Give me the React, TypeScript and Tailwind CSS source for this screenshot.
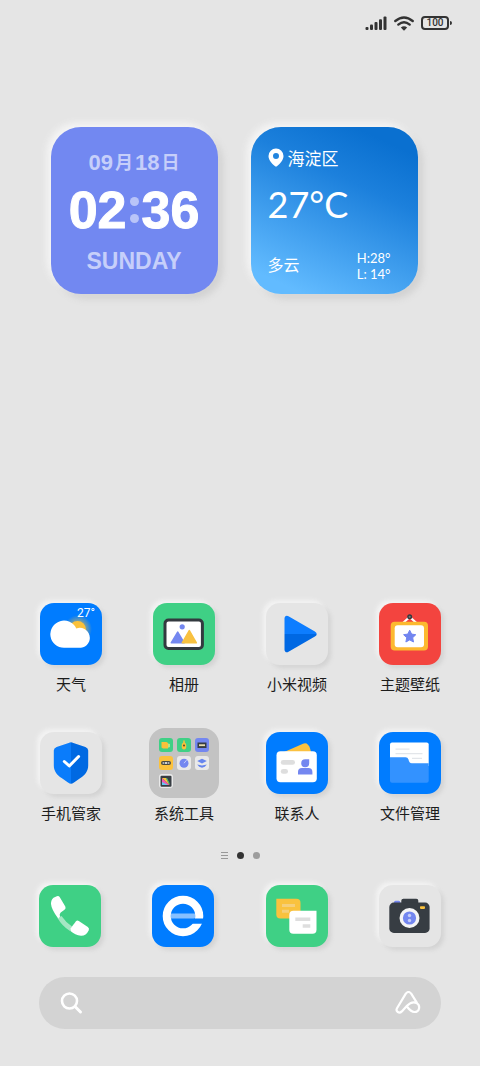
import type { ReactNode } from 'react';

interface AppItem {
  id: string;
  label: string;
  tile: string;
  icon: ReactNode;
}

const RAISED = 'shadow-[-3px_-3px_4px_#f3f3f3,3px_3px_4px_#d3d3d3]';
const RAISED_LARGE = 'shadow-[-4px_-4px_7px_#f5f5f5,5px_5px_7px_#d2d2d2]';

function Glyph({ children }: { children: ReactNode }) {
  return (
    <svg viewBox="0 0 62 62" className="block size-full" aria-hidden="true">
      {children}
    </svg>
  );
}

const weatherIcon = (
  <Glyph>
    <defs>
      <radialGradient id="sunGlow">
        <stop offset="0.45" stopColor="#fcc23c" stopOpacity="0.6" />
        <stop offset="1" stopColor="#fcc23c" stopOpacity="0" />
      </radialGradient>
    </defs>
    <circle cx="38" cy="26" r="14" fill="url(#sunGlow)" />
    <circle cx="37.5" cy="26.5" r="8.5" fill="#fbc13a" />
    <path d="M24 44.8a13.6 13.6 0 1 1 12.3-19.3a10 10 0 1 1 4.7 19.3z" fill="#fff" />
    <text x="37" y="14" fontSize="12" fill="#fff" fontFamily="Roboto, sans-serif">27°</text>
  </Glyph>
);

const galleryIcon = (
  <Glyph>
    <rect x="12" y="17" width="37.4" height="28.4" rx="3.5" fill="#fff" stroke="#33393f" strokeWidth="3" />
    <circle cx="29.2" cy="23.8" r="2.6" fill="#7487f0" />
    <path d="M18.3 39.8l6.4-10.6l6.4 10.6z" fill="#7487f0" stroke="#7487f0" strokeWidth="1.6" strokeLinejoin="round" />
    <path d="M29.3 39.8l7-12.2l7 12.2z" fill="#f8c140" stroke="#f8c140" strokeWidth="1.6" strokeLinejoin="round" />
  </Glyph>
);

const videoIcon = (
  <Glyph>
    <path d="M18.5 31V15.5c0-2.4 2-3.6 4-2.3l26.4 15.3q1.8 1 1.8 2.5z" fill="#0d7dff" />
    <path d="M18.5 31V46.5c0 2.4 2 3.6 4 2.3l26.4-15.3q1.8-1 1.8-2.5z" fill="#0068e3" />
  </Glyph>
);

const themeIcon = (
  <Glyph>
    <path d="M24 20l6.7-6l6.7 6" fill="none" stroke="#fff" strokeWidth="2.2" />
    <circle cx="30.7" cy="13.8" r="1.8" fill="#777" stroke="#33393f" strokeWidth="1.4" />
    <rect x="11.7" y="18.8" width="37.3" height="28.7" rx="4" fill="#fcb92f" />
    <rect x="15.7" y="22.2" width="29.3" height="22" rx="3" fill="#fff" />
    <path
      d="M30.7 27.2l1.9 3.9l4.2.6l-3.1 3l.8 4.3l-3.8-2.1l-3.8 2.1l.8-4.3l-3.1-3l4.2-.6z"
      fill="#7185f0"
      stroke="#7185f0"
      strokeWidth="1"
      strokeLinejoin="round"
    />
  </Glyph>
);

const securityIcon = (
  <Glyph>
    <path d="M31 10.2q1 0 2.4.7l12 4q2.8 1 2.8 3.6v15c0 6-3.6 9.6-7.8 12.6l-6.4 4.4q-1.8 1.2-3 1.2z" fill="#0069e2" />
    <path d="M31 10.2q-1 0-2.4.7l-12 4q-2.8 1-2.8 3.6v15c0 6 3.6 9.6 7.8 12.6l6.4 4.4q1.8 1.2 3 1.2z" fill="#0a7cfb" />
    <path d="M24.3 29.5l5 4.5l9.3-9.5" fill="none" stroke="#fff" strokeWidth="3" strokeLinecap="round" strokeLinejoin="round" />
  </Glyph>
);

const contactsIcon = (
  <Glyph>
    <path d="M17 20.5l20-8.8q3-1.2 5 1l1.5 2l1.8 6z" fill="#fbc140" />
    <rect x="10.5" y="19.3" width="40.3" height="31" rx="4" fill="#fff" />
    <rect x="14.8" y="28" width="14.2" height="4.8" rx="2.4" fill="#dedede" />
    <rect x="14.8" y="37" width="7.2" height="4.8" rx="2.4" fill="#dedede" />
    <path d="M43.200 27.2v3.9a4 4 0 1 1-4-3.9z" fill="#7487f0" />
    <path d="M32 42.5v-2.500q0-4 4-4h6.400q4 0 4 4v2.500z" fill="#7487f0" />
  </Glyph>
);

const filesIcon = (
  <Glyph>
    <path d="M11 30V12.5q0-2 2-2h34.7q2 0 2 2V34H11z" fill="#fff" />
    <path d="M16.5 17.2h14M16.5 21.7h27M33 26.3h10" stroke="#e3e6ea" strokeWidth="1.2" />
    <path d="M11 25.3h15.5q2.3 0 2.9 2l.6 2q.6 2 2.8 2h16.9v17.5q0 2-2 2H13q-2 0-2-2z" fill="#3392ff" />
  </Glyph>
);

const phoneIcon = (
  <Glyph>
    <path d="M22.5 31q4 6 10.500 10.500l-2 4.500q-8-5-12.500-13z" fill="#a4e7c3" />
    <path d="M14.500 12.700l3.300-1.500q2-.7 3 1l5.500 9.300q1 2-.8 3.300l-3.800 2.700q-1.600 1.300-.7 4.200l-1.800 1.700q-6.700-8.600-7.200-14.400q-.2-4 2.500-6.300z" fill="#fff" />
    <path d="M31.500 43.500l5.300-7q1.300-1.500 3-.5l9 6q1.800 1.300 1 3.200q-2.800 5.800-7.800 5.600q-6-.6-10.500-4.700z" fill="#fff" />
  </Glyph>
);

const browserIcon = (
  <Glyph>
    <rect x="18.5" y="28.5" width="25" height="5" fill="#86c0ff" />
    <circle cx="31" cy="31" r="16.3" fill="none" stroke="#fff" strokeWidth="8" />
    <path d="M42 33.5h12v5.2h-14z" fill="#007cff" />
  </Glyph>
);

const messagesIcon = (
  <Glyph>
    <path d="M10.3 13.8h20q4.2 0 4.2 4.2v11.500q0 4-4 4H14.300q-4 0-4-4z" fill="#f9c23e" />
    <path d="M16 20.500h13M16 26.300h7" stroke="#f5cf7a" strokeWidth="3" />
    <path d="M50.500 25.800h-23q-4.200 0-4.200 4.200v14.800q0 4 4 4h19.200q4 0 4-4z" fill="#fff" />
    <path d="M29.300 34.200h15M36.700 41h7.600" stroke="#dedede" strokeWidth="3.6" />
  </Glyph>
);

const cameraIcon = (
  <Glyph>
    <rect x="15" y="15.7" width="6.3" height="5" rx="1.5" fill="#7487f0" />
    <rect x="22.3" y="13.8" width="17" height="8" rx="2" fill="#373d43" />
    <rect x="10.3" y="17.6" width="40.3" height="30.3" rx="4.5" fill="#373d43" />
    <rect x="41" y="21.3" width="5" height="2.6" rx=".8" fill="#fcc23c" />
    <circle cx="30.5" cy="33" r="10" fill="#f5f5f5" />
    <circle cx="30.5" cy="33" r="6.6" fill="#7487f0" />
    <circle cx="30.5" cy="30.5" r="1.7" fill="#c5cdfa" />
    <circle cx="30.5" cy="35.5" r="1.7" fill="#c5cdfa" />
  </Glyph>
);

const folderMinis: { id: string; tile: string; art: ReactNode }[] = [
  {
    id: 'notes',
    tile: 'bg-[#3fd085]',
    art: (
      <>
        <path d="M2.500 4h5l1.500 1v5.500h-5l-1.500-1z" fill="#fbc13a" />
        <path d="M9 5.500l2 .5v3l-2 .7z" fill="#b5e58a" />
      </>
    ),
  },
  {
    id: 'compass',
    tile: 'bg-[#3fd085]',
    art: (
      <>
        <ellipse cx="7" cy="8" rx="2.3" ry="3.5" fill="#fbc13a" />
        <path d="M7 2.500v3" stroke="#fbc13a" strokeWidth="1.5" />
        <circle cx="7" cy="7.5" r="1" fill="#4d4a2e" />
      </>
    ),
  },
  {
    id: 'recorder',
    tile: 'bg-[#7487f0]',
    art: (
      <>
        <rect x="2.5" y="4.5" width="9" height="5.5" fill="#373d43" />
        <rect x="4" y="6.3" width="6" height="1.8" fill="#e8dcb0" />
      </>
    ),
  },
  {
    id: 'scanner',
    tile: 'bg-[#fcc23c]',
    art: (
      <>
        <rect x="2" y="5" width="10" height="4" rx="2" fill="#4a4a44" />
        <circle cx="4.5" cy="7" r="1.1" fill="#bbb" />
        <circle cx="9.5" cy="7" r="1.1" fill="#bbb" />
        <circle cx="7" cy="7" r="1" fill="#fff" />
      </>
    ),
  },
  {
    id: 'clock',
    tile: 'bg-[#e9e9e9]',
    art: (
      <>
        <circle cx="7" cy="7.2" r="4.5" fill="#7487f0" />
        <path d="M7 7.200l2.500-3" stroke="#c5cdfa" strokeWidth="1" />
      </>
    ),
  },
  {
    id: 'backup',
    tile: 'bg-[#e9e9e9]',
    art: (
      <>
        <path d="M7 2.800l4.800 2.300l-4.800 2.300l-4.800-2.300z" fill="#6685ee" />
        <path d="M2.200 8.500l4.800 1l4.800-1l-2 2.200l-2.800 1.100l-2.800-1.100z" fill="#6685ee" />
      </>
    ),
  },
  {
    id: 'palette',
    tile: 'bg-[#e9e9e9]',
    art: (
      <>
        <rect x="1.5" y="1.8" width="11" height="11" rx="1" fill="#373d43" />
        <path d="M3 4v7h7.500z" fill="#f15bb5" />
        <path d="M3 4h4l3.500 7z" fill="#fcc23c" />
        <path d="M7 4h1l2.500 5v2z" fill="#4bd07f" />
        <path d="M3 11h6l-6-3z" fill="#60c8f0" />
      </>
    ),
  },
];

const apps: AppItem[] = [
  { id: 'weather', label: '天气', tile: 'bg-[#007cff]', icon: weatherIcon },
  { id: 'gallery', label: '相册', tile: 'bg-[#3fd085]', icon: galleryIcon },
  { id: 'video', label: '小米视频', tile: 'bg-[#e5e5e5]', icon: videoIcon },
  { id: 'theme', label: '主题壁纸', tile: 'bg-[#f3443f]', icon: themeIcon },
  { id: 'security', label: '手机管家', tile: 'bg-[#e5e5e5]', icon: securityIcon },
  { id: 'tools', label: '系统工具', tile: '', icon: null },
  { id: 'contacts', label: '联系人', tile: 'bg-[#007cff]', icon: contactsIcon },
  { id: 'files', label: '文件管理', tile: 'bg-[#007cff]', icon: filesIcon },
];

const dock: AppItem[] = [
  { id: 'phone', label: '电话', tile: 'bg-[#3fd085]', icon: phoneIcon },
  { id: 'browser', label: '浏览器', tile: 'bg-[#007cff]', icon: browserIcon },
  { id: 'messages', label: '短信', tile: 'bg-[#3fd085]', icon: messagesIcon },
  { id: 'camera', label: '相机', tile: 'bg-[#e5e5e5]', icon: cameraIcon },
];

function Tile({ item }: { item: AppItem }) {
  return <span className={`block size-[62px] overflow-hidden rounded-[14px] ${RAISED} ${item.tile}`}>{item.icon}</span>;
}

function FolderTile() {
  return (
    <span className="-m-1 grid size-[70px] grid-cols-3 content-start gap-1 rounded-2xl bg-[#c3c3c3] p-[10px]">
      {folderMinis.map((mini) => (
        <span key={mini.id} className={`block size-[14px] rounded-[3px] ${mini.tile}`}>
          <svg viewBox="0 0 14 14" className="block size-full" aria-hidden="true">
            {mini.art}
          </svg>
        </span>
      ))}
    </span>
  );
}

function StatusBar() {
  return (
    <header className="flex h-[46px] items-center justify-end gap-[7px] pr-7">
      <svg viewBox="0 0 22 14" className="h-[14px] w-[22px]" fill="#333" aria-hidden="true">
        <rect x="0.5" y="11" width="3" height="3" rx="1" />
        <rect x="5" y="8.5" width="3" height="5.5" rx="1" />
        <rect x="9.5" y="6" width="3" height="8" rx="1" />
        <rect x="14" y="3.3" width="3" height="10.7" rx="1" />
        <rect x="18.5" y="0.5" width="3" height="13.5" rx="1" />
      </svg>
      <svg viewBox="0 0 20 15" className="h-[15px] w-5" fill="none" stroke="#333" strokeWidth="2.4" aria-hidden="true">
        <path d="M1.300 5q8.700-7 17.400 0" strokeLinecap="round" />
        <path d="M4.300 8.600q5.700-4.600 11.400 0" strokeLinecap="round" />
        <path d="M6.800 11.600q3.200-2.600 6.400 0L10 14.800z" fill="#333" stroke="none" />
      </svg>
      <div className="flex items-center gap-px">
        <span className="flex h-[14px] w-[28px] items-center justify-center rounded-[4px] border-2 border-[#333] font-[Roboto] text-[10px] leading-none font-medium text-[#333]">
          100
        </span>
        <span className="h-1 w-[2px] rounded-r-sm bg-[#333]" />
      </div>
    </header>
  );
}

function ClockWidget() {
  return (
    <section className={`flex h-[167px] w-[167px] flex-col items-center rounded-[30px] bg-[#7288f1] pt-6 font-bold ${RAISED_LARGE}`}>
      <p className="flex items-center gap-[2px] text-[22px] leading-6 text-[#c6cffa]">
        09<span className="text-lg leading-6">月</span>18<span className="text-lg leading-6">日</span>
      </p>
      <p className="mt-[7px] flex items-center text-[52px] leading-[56px] text-white [-webkit-text-stroke:1px_#fff]">
        02
        <span className="mx-[3px] flex flex-col gap-2" aria-hidden="true">
          <span className="size-[9px] rounded-full bg-[#b9c4f8]" />
          <span className="size-[9px] rounded-full bg-[#b9c4f8]" />
        </span>
        36
      </p>
      <p className="mt-[11px] text-[23px] leading-6 text-[#c6cffa]">SUNDAY</p>
    </section>
  );
}

function WeatherWidget() {
  return (
    <section
      className={`flex h-[167px] w-[167px] flex-col rounded-[30px] bg-[linear-gradient(205deg,#0a70d0_12%,#1c80dc_35%,#62bbff_90%)] px-[17px] pt-[21px] text-white ${RAISED_LARGE}`}
    >
      <div className="flex items-start gap-1">
        <svg viewBox="0 0 16 19" className="h-[19px] w-4" aria-hidden="true">
          <path
            d="M8 .5a7.4 7.4 0 0 1 7.500 7.400c0 4-3.200 7.200-6.300 10.200q-1.200 1-2.400 0C3.700 15.100.5 11.900.5 7.900A7.400 7.400 0 0 1 8 .5zM8 5a3 3 0 1 0 0 6a3 3 0 0 0 0-6z"
            fill="#fff"
            fillRule="evenodd"
          />
        </svg>
        <span className="text-[17px] leading-6">海淀区</span>
      </div>
      <p className="mt-2 font-[Lato] text-[36px] leading-[48px]">27°C</p>
      <div className="mt-[22px] flex items-center justify-between pr-[10px]">
        <span className="text-base leading-6">多云</span>
        <div className="font-[Lato] text-[13px] leading-4">
          <p>H:28°</p>
          <p>L: 14°</p>
        </div>
      </div>
    </section>
  );
}

function SearchBar() {
  return (
    <form className="flex h-[52px] items-center rounded-full bg-[#d3d3d3] px-5" onSubmit={(e) => e.preventDefault()}>
      <button type="submit" aria-label="搜索" className="shrink-0">
        <svg viewBox="0 0 24 24" className="size-6" fill="none" stroke="#fff" strokeWidth="2.6" strokeLinecap="round" aria-hidden="true">
          <circle cx="10.5" cy="10" r="7.5" />
          <path d="M16 15.500l5.500 5.500" strokeWidth="3" />
        </svg>
      </button>
      <input type="search" aria-label="搜索" className="min-w-0 flex-1 bg-transparent px-3 text-base text-[#333] outline-none" />
      <button type="button" aria-label="语音助手" className="shrink-0">
        <svg viewBox="0 0 26 24" className="h-6 w-[26px]" fill="none" stroke="#fff" strokeWidth="2.2" strokeLinecap="round" strokeLinejoin="round" aria-hidden="true">
          <path d="M21.800 11.600L16.200 2.600q-2.700-3.200-5.400 0L2 17.200c-1.700 3.200 2.200 5.800 4.800 3.200L12 14.800c3-3 6.500-4.300 9.600-2.700c4.200 2.300 3 8.900-2.200 8.900c-3.400 0-5-2.200-7.400-5.400" />
        </svg>
      </button>
    </form>
  );
}

export default function App() {
  return (
    <div className="flex min-h-screen flex-col bg-[#e5e5e5] font-['Liberation_Sans','Noto_Sans_CJK_SC',sans-serif]">
      <StatusBar />

      <main className="flex flex-1 flex-col justify-between pt-[81px]">
        <div className="grid grid-cols-2 justify-items-center pr-[46px] pl-[34px]">
          <ClockWidget />
          <WeatherWidget />
        </div>

        <div className="flex flex-col px-[39px] pt-10 pb-[37px]">
          <nav className="grid grid-cols-[repeat(4,62px)] justify-between gap-y-[35px] pl-px">
            {apps.map((item) => (
              <button key={item.id} type="button" className="flex cursor-pointer flex-col items-center">
                {item.id === 'tools' ? <FolderTile /> : <Tile item={item} />}
                <span className="mt-2 text-[15px] leading-6 whitespace-nowrap text-[#1c1c1c]">{item.label}</span>
              </button>
            ))}
          </nav>

          {/* Page indicator */}
          <div className="mt-[26px] flex h-[7px] items-center justify-center gap-[9px]" aria-hidden="true">
            <span className="flex w-[7px] flex-col gap-[2px]">
              <span className="h-px bg-[#999]" />
              <span className="h-px bg-[#999]" />
              <span className="h-px bg-[#999]" />
            </span>
            <span className="size-[7px] rounded-full bg-[#333]" />
            <span className="size-[7px] rounded-full bg-[#9d9d9d]" />
          </div>

          <div className="mt-[26px] mb-[30px] flex justify-between">
            {dock.map((item) => (
              <button key={item.id} type="button" aria-label={item.label} className="cursor-pointer">
                <Tile item={item} />
              </button>
            ))}
          </div>

          <SearchBar />
        </div>
      </main>
    </div>
  );
}
